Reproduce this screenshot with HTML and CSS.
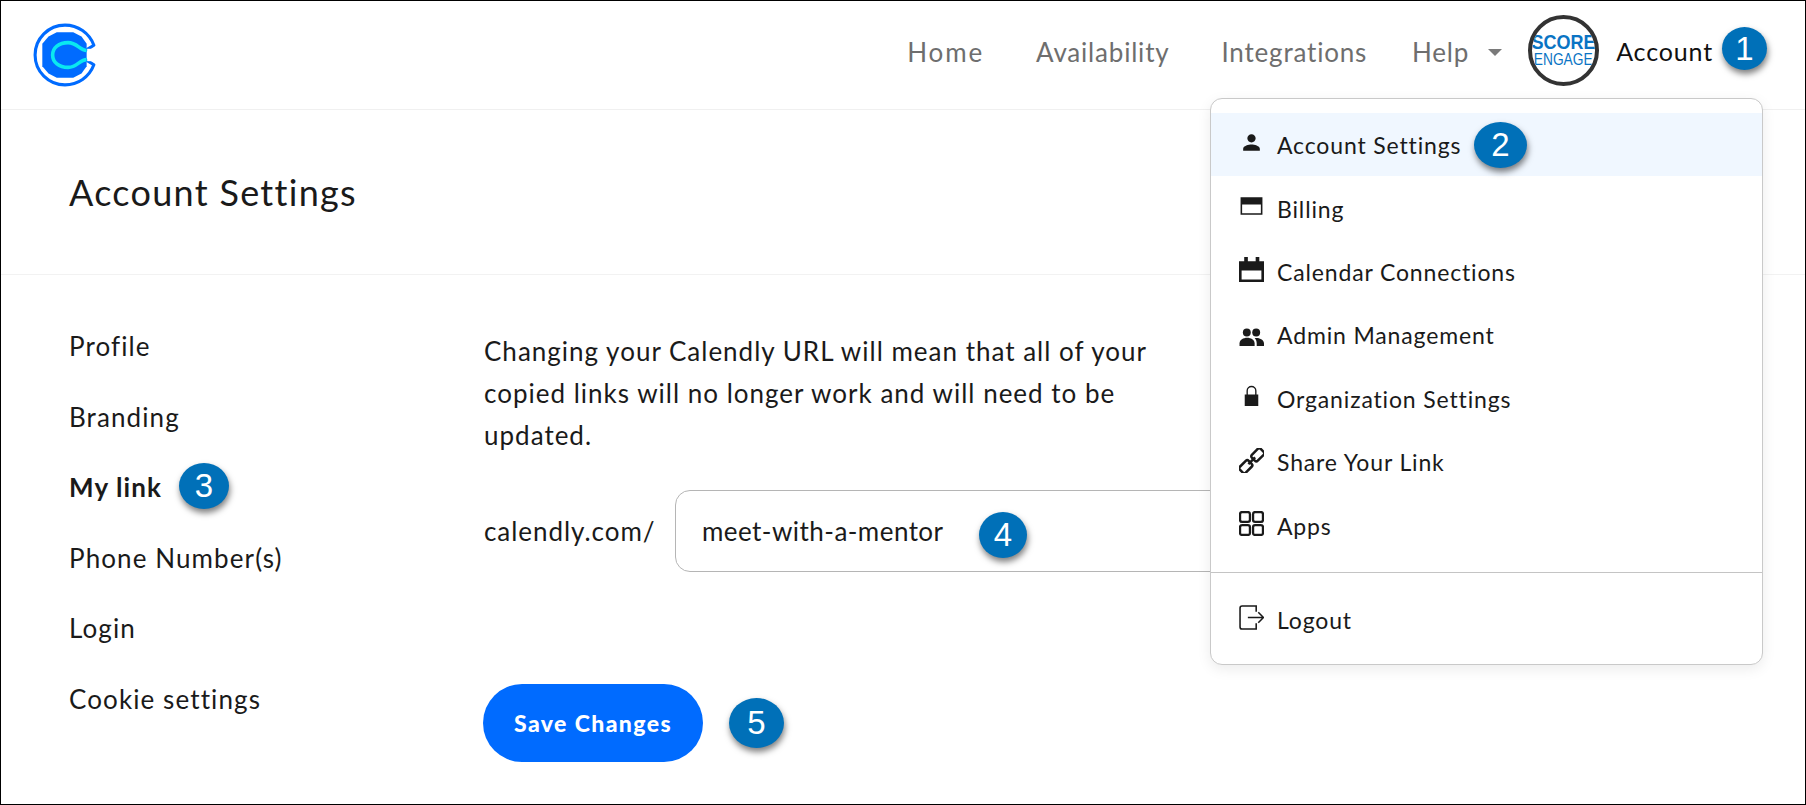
FILE: index.html
```html
<!DOCTYPE html>
<html lang="en">
<head>
<meta charset="utf-8">
<title>Account Settings</title>
<link rel="stylesheet" href="styles.css">
</head>
<body>
<div class="page">
  <header class="topbar">
    <svg class="logo" viewBox="0 0 64 64" width="64" height="64">
      <path class="logo-ring" d="M60 22.500 C55.500 10.500 44.500 3 32 3 C16 3 3 16 3 32 C3 48 16 61 32 61 C44.500 61 55.500 53.500 60 41.500 L52 36.500 C51 36 49.500 36 48 36 L48 28 C49.500 28 51 28 52 27.500 Z"/>
      <path class="logo-fill" d="M24 10 H40 L48 14 L53 21 V43 L48 50 L40 54 H24 L16 50 L10 43 V21 L16 14 Z"/>
      <path class="logo-white" d="M53.500 26 H62 V38 H53.500 Z"/>
      <path class="logo-cut" d="M53 27.500 C46 27.500 44 20 35 20 C26 20 20 25 20 32 C20 39 26 44 35 44 C44 44 46 36.500 53 36.500"/>
    </svg>
    <nav class="nav">
      <a class="nav-link nav-home">Home</a>
      <a class="nav-link">Availability</a>
      <a class="nav-link">Integrations</a>
      <a class="nav-link nav-help">Help<span class="caret"></span></a>
    </nav>
    <div class="avatar">
      <span class="avatar-top">SCORE</span>
      <span class="avatar-bottom">ENGAGE</span>
    </div>
    <span class="account">Account</span>
  </header>

  <section class="title-row">
    <h1 class="title">Account Settings</h1>
  </section>

  <main class="content">
    <ul class="side">
      <li>Profile</li>
      <li>Branding</li>
      <li class="active">My link</li>
      <li>Phone Number(s)</li>
      <li>Login</li>
      <li>Cookie settings</li>
    </ul>
    <div class="form">
      <p class="note">Changing your Calendly URL will mean that all of your copied links will no longer work and will need to be updated.</p>
      <div class="url-row">
        <label class="url-label">calendly.com/</label>
        <div class="url-input">meet-with-a-mentor</div>
      </div>
      <button class="save">Save Changes</button>
    </div>
  </main>

  <div class="menu">
    <div class="menu-list">
      <a class="item current">
        <svg class="icon" viewBox="0 0 24 24"><path d="M12 12c2.210 0 4-1.790 4-4s-1.790-4-4-4-4 1.790-4 4 1.790 4 4 4zm0 2c-2.670 0-8 1.340-8 4v2h16v-2c0-2.660-5.330-4-8-4z"/></svg>
        Account Settings
      </a>
      <a class="item">
        <svg class="icon" viewBox="0 0 24 24"><path d="M1.500 3h21v17h-21zM3 10v8.500h18V10z" fill-rule="evenodd"/></svg>
        Billing
      </a>
      <a class="item">
        <svg class="icon" viewBox="0 0 24 24"><path d="M0 4h5V0h3.500v4h7.500V0h3.500v4H24v20H0zM2.500 13v8.500h19V13z" fill-rule="evenodd"/></svg>
        Calendar Connections
      </a>
      <a class="item">
        <svg class="icon" viewBox="0 0 24 24"><circle cx="7.500" cy="11" r="3.800"/><circle cx="16.500" cy="11" r="3.800"/><path d="M0.500 24v-2.500c0-3.500 3.700-5.500 7.300-5.500s7.200 2 7.200 5.500V24z"/><path d="M17 24h7v-2.500c0-3-3.500-5.200-7-5.200-.6 0-1.400.1-2 .3 1.400 1.100 2 2.900 2 5.200z"/></svg>
        Admin Management
      </a>
      <a class="item">
        <svg class="icon" viewBox="0 0 24 24"><path d="M5.500 10h1.700V6.500a4.800 4.800 0 0 1 9.600 0V10h1.700v11h-13zM8.500 10h7V6.500a3.500 3.500 0 0 0-7 0z" fill-rule="evenodd"/></svg>
        Organization Settings
      </a>
      <a class="item">
        <svg class="icon line link" viewBox="0 0 24 24"><rect x="0.500" y="14" width="12" height="8" rx="2" transform="rotate(-45 6.500 18)"/><rect x="12" y="2.500" width="12" height="8" rx="2" transform="rotate(-45 18 6.500)"/><path d="M9 15.500L15.500 9"/></svg>
        Share Your Link
      </a>
      <a class="item">
        <svg class="icon line" viewBox="0 0 24 24"><rect x="1" y="1" width="9.500" height="9.500" rx="2"/><rect x="13.500" y="1" width="9.500" height="9.500" rx="2"/><rect x="1" y="13.500" width="9.500" height="9.500" rx="2"/><rect x="13.500" y="13.500" width="9.500" height="9.500" rx="2"/></svg>
        Apps
      </a>
    </div>
    <a class="item logout">
      <svg class="icon line thin" viewBox="0 0 24 24"><path d="M16.500 6.500V1H3a2 2 0 0 0-2 2v18a2 2 0 0 0 2 2h13.500v-5.500M8.500 12H23.500M18.500 7l5 5-5 5"/></svg>
      Logout
    </a>
  </div>

  <span class="badge b1">1</span>
  <span class="badge b2">2</span>
  <span class="badge b3">3</span>
  <span class="badge b4">4</span>
  <span class="badge b5">5</span>
</div>
</body>
</html>
```
FILE: styles.css
```css
* { box-sizing: border-box; }
html, body { margin: 0; padding: 0; background: #fff; }
body { font-family: "Lato", "Liberation Sans", sans-serif; color: #1a1a1a; }
.page { position: relative; width: 1806px; height: 805px; border: 1px solid #000; overflow: hidden; background: #fff; }

.topbar { display: flex; align-items: center; height: 109px; padding: 0 0 6px 31px; border-bottom: 1px solid #f0f0f0; }
.logo { width: 66px; height: 66px; flex: none; margin-top: 6px; }
.logo-ring { fill: #fff; stroke: #006bff; stroke-width: 3; stroke-linejoin: round; }
.logo-fill { fill: #006bff; }
.logo-white { fill: #fff; }
.logo-cut { fill: none; stroke: #0ae8f0; stroke-width: 3.500; }
.nav { display: flex; align-items: center; gap: 52px; margin-left: auto; font-size: 26px; letter-spacing: .8px; color: #6e6e6e; }
.nav-link { display: flex; align-items: center; }
.nav-home { letter-spacing: 1.9px; }
.nav-help { margin-left: -7px; }
.caret { width: 0; height: 0; margin-left: 19px; border-left: 7px solid transparent; border-right: 7px solid transparent; border-top: 7px solid #7a7a7a; }
.avatar { display: flex; flex-direction: column; align-items: center; justify-content: center; flex: none; width: 71px; height: 71px; margin: -4px 0 0 26px; border: 4.500px solid #333; border-radius: 50%; overflow: hidden; color: #0a74c4; font-family: "Liberation Sans", sans-serif; line-height: 1; }
.avatar-top { font-size: 20px; font-weight: 700; transform: scaleX(.9); }
.avatar-bottom { font-size: 16px; transform: scaleX(.86); }
.account { margin: -2px 92px 0 17px; font-size: 25px; letter-spacing: .85px; color: #111; }

.title-row { display: flex; align-items: center; height: 165px; padding: 0 0 0 68px; border-bottom: 1px solid #f2f2f2; }
.title { margin: 0; font-size: 36px; font-weight: 400; letter-spacing: 1.3px; color: #1a1a1a; }

.content { display: flex; padding: 36px 0 0 68px; }
.side { list-style: none; margin: 0; padding: 0; width: 415px; flex: none; font-size: 26px; letter-spacing: 1.1px; }
.side li { height: 70.600px; line-height: 70.600px; }
.side .active { font-weight: 700; }
.form { display: flex; flex-direction: column; align-items: flex-start; width: 840px; }
.note { width: 680px; margin: 19px 0 0; font-size: 26px; letter-spacing: 1px; line-height: 42px; }
.url-row { display: flex; align-items: center; margin-top: 34px; }
.url-label { width: 191px; font-size: 26px; letter-spacing: .95px; }
.url-input { width: 640px; height: 82px; padding-left: 26px; border: 1px solid #b5b5b5; border-radius: 15px; font-size: 26px; letter-spacing: .45px; line-height: 80px; }
.save { width: 220px; height: 78px; margin: 112px 0 0 -1px; border: 0; border-radius: 39px; background: #006bff; color: #fff; font: 900 23px "Lato", "Liberation Sans", sans-serif; letter-spacing: 1.4px; }

.menu { position: absolute; left: 1209px; top: 97px; width: 553px; height: 567px; padding-top: 14px; background: #fff; border: 1px solid #c9c9c9; border-radius: 12px; box-shadow: 0 4px 14px rgba(0,0,0,.08); }
.menu-list { padding-bottom: 15px; border-bottom: 1px solid #c4c4c4; }
.item { display: flex; align-items: center; gap: 13px; height: 63.400px; padding: 1px 0 0 28px; font-size: 23px; letter-spacing: .85px; color: #1a1a1a; }
.item.current { background: #f0f7ff; padding-top: 0; }
.logout { margin-top: 15px; }
.icon { width: 25px; height: 25px; flex: none; margin-top: -4px; fill: #1a1a1a; }
.icon.line { fill: none; stroke: #1a1a1a; stroke-width: 2.200; }
.icon.link { stroke-width: 2.400; }
.icon.thin { stroke-width: 1.500; }

.badge { position: absolute; display: flex; align-items: center; justify-content: center; background: #0070b8; border-radius: 50%; color: #fff; font-family: "Liberation Sans", sans-serif; font-size: 33px; box-shadow: 1px 4px 6px rgba(0,0,0,.5); }
.b1 { left: 1721px; top: 26px; width: 45px; height: 43px; }
.b2 { left: 1473px; top: 121px; width: 53px; height: 46px; }
.b3 { left: 178px; top: 462px; width: 50px; height: 46px; }
.b4 { left: 978px; top: 511px; width: 48px; height: 46px; }
.b5 { left: 728px; top: 697px; width: 55px; height: 50px; }
```
